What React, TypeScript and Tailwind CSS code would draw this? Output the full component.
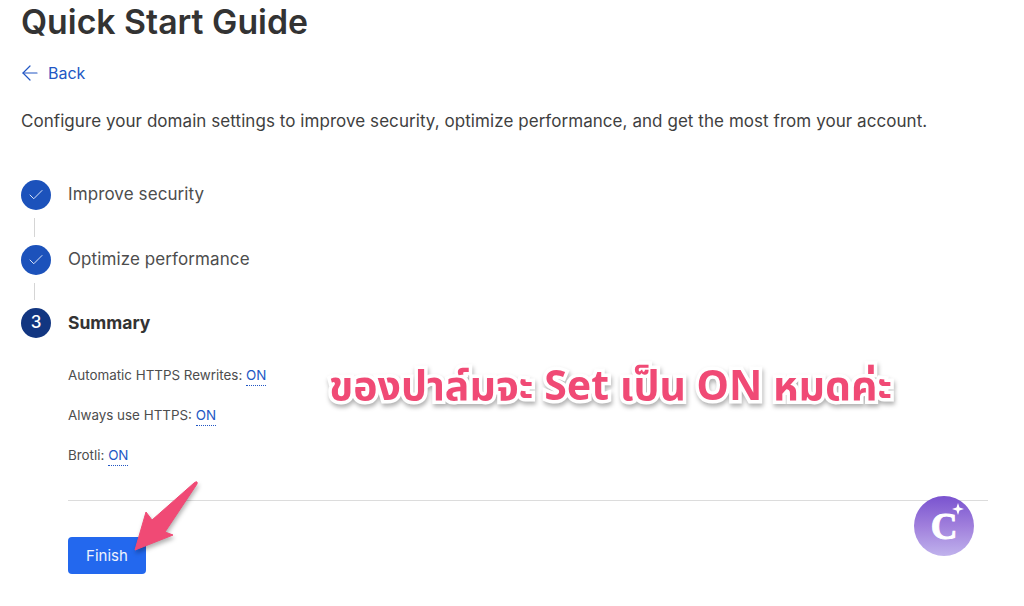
import React from 'react';
import { ArrowLeft, Check } from 'lucide-react';

const settings = [
  { label: 'Automatic HTTPS Rewrites:' },
  { label: 'Always use HTTPS:' },
  { label: 'Brotli:' },
];

function DoneStep({ label }: { label: string }) {
  return (
    <div className="flex items-center gap-[17px] h-[30px]">
      <div className="w-[30px] h-[30px] rounded-full bg-[#1c52bb] flex items-center justify-center">
        <Check className="w-[18px] h-[18px] text-[#dfe8fa]" strokeWidth={1.3} />
      </div>
      <span className="text-[17px] tracking-[0.1px] text-[#4d4d4d]">{label}</span>
    </div>
  );
}

export default function App() {
  return (
    <div className="relative w-[1024px] h-[606px] overflow-hidden bg-white pl-[21px] pr-[36px] font-['Inter',sans-serif]">
      <h1 className="text-[33.8px] leading-[44px] font-semibold text-[#333333]">Quick Start Guide</h1>

      <a className="mt-[17px] flex items-center gap-[6px] h-[24px] text-[16px] text-[#2257c4]">
        <ArrowLeft className="-ml-[3px] w-[24px] h-[24px]" strokeWidth={1.2} />
        Back
      </a>

      <p className="mt-[24px] text-[17px] tracking-[0.06px] leading-[24px] text-[#3f3f3f]">
        Configure your domain settings to improve security, optimize performance, and get the most from your account.
      </p>

      <div className="mt-[47px]">
        <DoneStep label="Improve security" />
        <div className="ml-[13px] w-px h-[19px] my-[8px] bg-[#d5d5d5]" />
        <DoneStep label="Optimize performance" />
        <div className="ml-[13px] w-px h-[17px] my-[8px] bg-[#d5d5d5]" />
        <div className="flex items-center gap-[17px] h-[30px]">
          <div className="w-[30px] h-[30px] rounded-full bg-[#123681] flex items-center justify-center text-white text-[17px] font-medium">
            3
          </div>
          <span className="text-[17.5px] font-bold text-[#333333]">Summary</span>
        </div>
      </div>

      <div className="ml-[47px]">
        <div className="mt-[27px] flex flex-col gap-[20px]">
          {settings.map((s) => (
            <div key={s.label} className="h-[20px] leading-[20px] text-[13.4px] text-[#4d4d4d]">
              {s.label}{' '}
              <span className="text-[#2257c4] pb-[2px] border-b border-dotted border-[#2257c4]">ON</span>
            </div>
          ))}
        </div>

        <div className="mt-[35px] h-px bg-[#dcdcdc]" />

        <button className="mt-[36px] w-[78px] h-[37px] pt-[2px] rounded-[4px] bg-[#2368ee] text-[#eef3fd] text-[15px] flex items-center justify-center">
          Finish
        </button>
      </div>

      {/* annotation added on top of the screenshot */}
      <div className="absolute left-[329px] top-[358px] text-[41px] leading-[52px] font-bold whitespace-nowrap text-[#f04a75] font-['Noto_Sans','Noto_Sans_Thai','Lato',sans-serif] [-webkit-text-stroke:7px_white] [paint-order:stroke_fill] [filter:drop-shadow(1px_3px_2px_rgba(0,0,0,0.3))]">
        ของปาล์มจะ Set เป็น ON หมดค่ะ
      </div>

      <svg className="absolute left-[130px] top-[475px] drop-shadow-[1px_3px_2px_rgba(0,0,0,0.3)]" width="72" height="80" viewBox="0 0 72 80">
        <path d="M5 75 L16 37 L22 45 L64 8 Q68 5 67 9 L35 57 L43 60 Z" fill="#f04a75" stroke="#f04a75" strokeWidth="1" strokeLinejoin="round" />
      </svg>

      <div className="absolute left-[914px] top-[496px] w-[60px] h-[60px] rounded-full bg-gradient-to-b from-[#7a52cf] via-[#a07fdc] to-[#c0b2ec] flex items-center justify-center">
        <span className="text-white text-[37px] leading-none font-bold font-['Liberation_Serif',serif] [-webkit-text-stroke:1px_white]">C</span>
        <svg className="absolute left-[38px] top-[7px]" width="12" height="12" viewBox="0 0 12 12">
          <path d="M6 0 L7.5 4.5 L12 6 L7.5 7.5 L6 12 L4.5 7.5 L0 6 L4.5 4.5 Z" fill="white" />
        </svg>
      </div>
    </div>
  );
}
